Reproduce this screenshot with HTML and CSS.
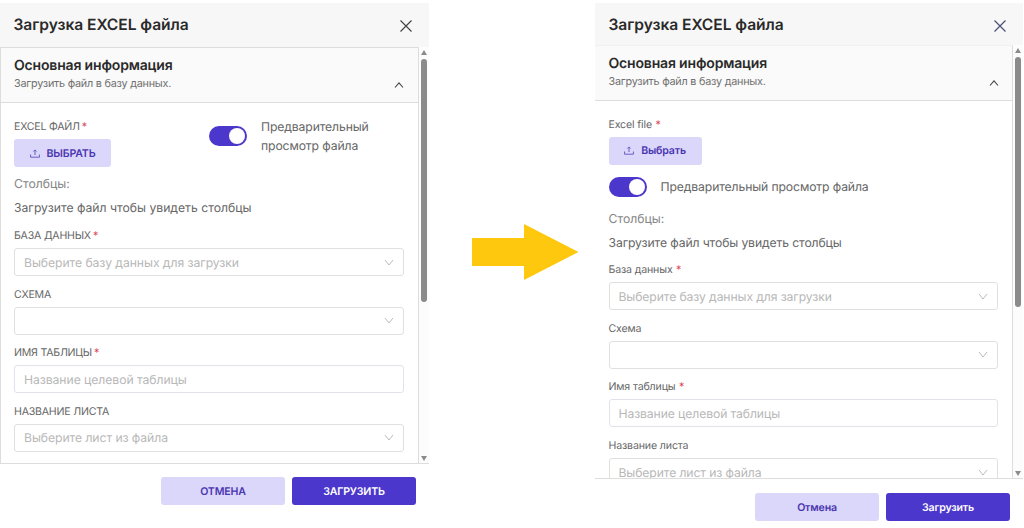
FILE: index.html
```html
<!DOCTYPE html>
<html lang="ru">

<head>
  <meta charset="UTF-8">
  <meta name="viewport" content="width=device-width, initial-scale=1.0">
  <title>Загрузка EXCEL файла</title>
  <link rel="stylesheet" href="styles.css">
</head>

<body>

  <main class="compare">

    <section class="modal modal-old">
      <header class="modal-header">
        <h1 class="modal-title">Загрузка EXCEL файла</h1>
        <svg class="close" viewBox="0 0 12 12"><path d="M.5 .5l11 11M11.5 .5l-11 11"/></svg>
      </header>
      <div class="modal-body">
        <div class="panel">
          <div class="panel-header">
            <div>
              <h2 class="panel-title">Основная информация</h2>
              <p class="panel-desc">Загрузить файл в базу данных.</p>
            </div>
            <svg class="caret" viewBox="0 0 10 6"><path d="M1 5.5l4-4.6 4 4.6"/></svg>
          </div>
          <div class="panel-content">
            <div class="file-row">
              <div class="file-col">
                <div class="label">EXCEL ФАЙЛ<i class="req">*</i></div>
                <button class="btn btn-light btn-pick">
                  <svg class="upload" viewBox="0 0 10 9"><path d="M.6 5.5v2.7h8.8V5.5M5 6V1M3.4 2.5L5 .9l1.6 1.6"/></svg>
                  <span>ВЫБРАТЬ</span>
                </button>
              </div>
              <div class="switch-row">
                <span class="switch"></span>
                <span class="switch-text">Предварительный<br>просмотр файла</span>
              </div>
            </div>
            <p class="columns">Столбцы:</p>
            <p class="hint">Загрузите файл чтобы увидеть столбцы</p>
            <div class="field">
              <div class="label">БАЗА ДАННЫХ<i class="req">*</i></div>
              <div class="input">Выберите базу данных для загрузки<svg class="arrow" viewBox="0 0 10 7"><path d="M1 1l4 5 4-5"/></svg></div>
            </div>
            <div class="field">
              <div class="label">СХЕМА</div>
              <div class="input"><svg class="arrow" viewBox="0 0 10 7"><path d="M1 1l4 5 4-5"/></svg></div>
            </div>
            <div class="field">
              <div class="label">ИМЯ ТАБЛИЦЫ<i class="req">*</i></div>
              <div class="input input-text">Название целевой таблицы</div>
            </div>
            <div class="field">
              <div class="label">НАЗВАНИЕ ЛИСТА</div>
              <div class="input">Выберите лист из файла<svg class="arrow" viewBox="0 0 10 7"><path d="M1 1l4 5 4-5"/></svg></div>
            </div>
          </div>
        </div>
        <div class="scrollbar">
          <span class="scroll-up"></span>
          <span class="scroll-thumb"></span>
          <span class="scroll-down"></span>
        </div>
      </div>
      <footer class="modal-footer">
        <button class="btn btn-light btn-wide">ОТМЕНА</button>
        <button class="btn btn-primary btn-wide">ЗАГРУЗИТЬ</button>
      </footer>
    </section>

    <div class="between">
      <svg class="big-arrow" viewBox="0 0 107 56"><path d="M0 14h52V0l54.500 28L52 56V42H0z"/></svg>
    </div>

    <section class="modal modal-new">
      <header class="modal-header">
        <h1 class="modal-title">Загрузка EXCEL файла</h1>
        <svg class="close" viewBox="0 0 12 12"><path d="M.5 .5l11 11M11.5 .5l-11 11"/></svg>
      </header>
      <div class="modal-body">
        <div class="panel">
          <div class="panel-header">
            <div>
              <h2 class="panel-title">Основная информация</h2>
              <p class="panel-desc">Загрузить файл в базу данных.</p>
            </div>
            <svg class="caret" viewBox="0 0 10 6"><path d="M1 5.500l4-4.600 4 4.600"/></svg>
          </div>
          <div class="panel-content">
            <div class="file-col">
              <div class="label">Excel file<i class="req">*</i></div>
              <button class="btn btn-light btn-pick">
                <svg class="upload" viewBox="0 0 10 9"><path d="M.6 5.5v2.7h8.8V5.5M5 6V1M3.4 2.5L5 .9l1.6 1.6"/></svg>
                <span>Выбрать</span>
              </button>
            </div>
            <div class="switch-row">
              <span class="switch"></span>
              <span class="switch-text">Предварительный просмотр файла</span>
            </div>
            <p class="columns">Столбцы:</p>
            <p class="hint">Загрузите файл чтобы увидеть столбцы</p>
            <div class="field">
              <div class="label">База данных<i class="req">*</i></div>
              <div class="input">Выберите базу данных для загрузки<svg class="arrow" viewBox="0 0 10 7"><path d="M1 1l4 5 4-5"/></svg></div>
            </div>
            <div class="field">
              <div class="label">Схема</div>
              <div class="input"><svg class="arrow" viewBox="0 0 10 7"><path d="M1 1l4 5 4-5"/></svg></div>
            </div>
            <div class="field">
              <div class="label">Имя таблицы<i class="req">*</i></div>
              <div class="input input-text">Название целевой таблицы</div>
            </div>
            <div class="field">
              <div class="label">Название листа</div>
              <div class="input">Выберите лист из файла<svg class="arrow" viewBox="0 0 10 7"><path d="M1 1l4 5 4-5"/></svg></div>
            </div>
          </div>
        </div>
        <div class="scrollbar">
          <span class="scroll-up"></span>
          <span class="scroll-thumb"></span>
          <span class="scroll-down"></span>
        </div>
      </div>
      <footer class="modal-footer">
        <button class="btn btn-light btn-wide">Отмена</button>
        <button class="btn btn-primary btn-wide">Загрузить</button>
      </footer>
    </section>

  </main>

</body>
</html>
```
FILE: styles.css
```css
* {
  box-sizing: border-box;
}

body {
  margin: 0;
  background-color: #fff;
  font-family: Inter, 'Liberation Sans', sans-serif;
  color: #666;
  overflow: hidden;
  text-rendering: geometricPrecision;
}

h1,
h2,
p {
  margin: 0;
}

svg {
  display: block;
  flex: none;
  fill: none;
}

.compare {
  display: grid;
  grid-template-columns: 429px 166px 428px;
  height: 528px;
  padding-top: 3px;
}

/* modal */
.modal {
  display: flex;
  flex-direction: column;
  min-width: 0;
}

.modal-header {
  display: flex;
  justify-content: space-between;
  flex: none;
  height: 44px;
  padding: 0 17.5px 0 13.5px;
  background-color: #f7f7f7;
}

.modal-new .modal-header {
  height: 42px;
}

.modal-title {
  font-size: 15.6px;
  line-height: 43px;
  font-weight: 600;
  letter-spacing: -0.06px;
  color: #2a2a2a;
  white-space: nowrap;
}

.close {
  width: 12px;
  height: 12px;
  margin-top: 17px;
  stroke: #444;
  stroke-width: 1.2;
}

.modal-new .close {
  stroke: #4a4d75;
}

.modal-body {
  display: flex;
  flex: none;
  height: 417px;
  border-bottom: 1px solid #ddd;
}

.modal-new .modal-body {
  height: 434px;
}

.modal-footer {
  display: flex;
  justify-content: flex-end;
  gap: 7px;
  padding: 13px 13px 0 0;
}

.modal-new .modal-footer {
  padding-top: 14px;
}

/* panel */
.panel {
  flex: 1;
  min-width: 0;
  border: 1px solid #ddd;
  border-bottom: none;
  overflow: hidden;
}

.modal-new .panel {
  border-left: none;
  border-top-color: #f0f0f0;
}

.panel-header {
  display: flex;
  justify-content: space-between;
  height: 55px;
  padding: 8px 14px 0 13px;
  background-color: #fafafa;
  border-bottom: 1px solid #ddd;
}

.panel-title {
  font-size: 14px;
  line-height: 19px;
  font-weight: 600;
  letter-spacing: -0.17px;
  color: #2a2a2a;
  white-space: nowrap;
}

.panel-desc {
  font-size: 10.8px;
  line-height: 17px;
  letter-spacing: -0.22px;
  color: #707070;
}

.caret {
  width: 10px;
  height: 6px;
  margin-top: 26px;
  stroke: #444;
  stroke-width: 1.1;
}

.panel-content {
  padding: 15px 14px 0 13px;
}

.modal-new .panel-header {
  padding-left: 13.5px;
  padding-right: 13.5px;
}

.modal-new .panel-content {
  padding: 14.5px 14px 0 13.5px;
}

/* file picker */
.file-row {
  display: flex;
}

.file-col {
  width: 195px;
}

.label {
  height: 18px;
  margin-bottom: 3px;
  font-size: 10.6px;
  line-height: 18px;
  letter-spacing: -0.22px;
  white-space: nowrap;
}

.modal-new .label {
  letter-spacing: -0.15px;
}

.req {
  margin-left: 2px;
  color: #e04355;
  font-style: normal;
}

.modal-new .req {
  margin-left: 3.5px;
}

.btn {
  display: flex;
  align-items: center;
  justify-content: center;
  height: 28px;
  padding: 0;
  border: none;
  border-radius: 3px;
  font-family: inherit;
  font-size: 10.6px;
  font-weight: 600;
  letter-spacing: -0.18px;
  text-rendering: inherit;
}

.btn-light {
  background-color: #dbd7fa;
  color: #4a36b0;
}

.btn-primary {
  background-color: #4b37cb;
  color: #fff;
}

.btn-wide {
  width: 124px;
}

.btn-pick {
  gap: 7px;
  width: 97px;
}

.modal-new .btn-pick {
  width: 93px;
}

.upload {
  width: 10px;
  height: 9px;
  stroke: #6b5cc4;
}

.switch-row {
  display: flex;
  align-items: center;
  gap: 14px;
  height: 35px;
}

.switch {
  width: 38px;
  height: 20px;
  padding: 2px;
  border-radius: 10px;
  background-color: #4b37cb;
}

.switch::after {
  content: '';
  display: block;
  width: 16px;
  height: 16px;
  margin-left: auto;
  border-radius: 50%;
  background-color: #fff;
}

.switch-text {
  font-size: 12.2px;
  line-height: 19px;
  letter-spacing: -0.12px;
  white-space: nowrap;
}

.modal-new .switch-row {
  height: 20px;
  margin-top: 12px;
}

.columns,
.hint {
  font-size: 12.2px;
  line-height: 24px;
}

.columns {
  margin-top: 5px;
  color: #858585;
}

.modal-new .columns {
  margin-top: 10px;
}

.hint {
  margin-bottom: 7px;
}

.modal-new .hint {
  margin-bottom: 6.8px;
  letter-spacing: -0.12px;
}

/* fields */
.field {
  height: 58.6px;
}

.input {
  display: flex;
  align-items: center;
  justify-content: space-between;
  height: 28px;
  padding: 0 9px;
  border: 1px solid #e0e0e0;
  border-radius: 3px;
  font-size: 12.2px;
  letter-spacing: -0.06px;
  color: #b8b8b8;
}

.modal-new .input {
  letter-spacing: -0.11px;
}

.input-text {
  border-color: #e2e2ec;
}

.arrow {
  width: 10px;
  height: 7px;
  margin-left: auto;
  stroke: #bbb;
}

/* scrollbar */
.scrollbar {
  display: flex;
  flex-direction: column;
  align-items: center;
  width: 10px;
  padding: 3px 0 2px;
  background-color: #fcfcfc;
}

.scroll-up,
.scroll-down {
  border: 3px solid transparent;
  border-top: none;
  border-bottom: 5px solid #8b8b8b;
}

.scroll-down {
  margin-top: auto;
  border-top: 5px solid #8b8b8b;
  border-bottom: none;
}

.scroll-thumb {
  width: 6px;
  height: 243px;
  margin-top: 4px;
  border-radius: 3px;
  background-color: #8b8b8b;
}

.modal-new .scroll-thumb {
  height: 250px;
}

/* arrow between the two versions */
.between {
  padding: 221px 0 0 43px;
}

.big-arrow {
  width: 107px;
  height: 56px;
  fill: #fec80e;
}
```
